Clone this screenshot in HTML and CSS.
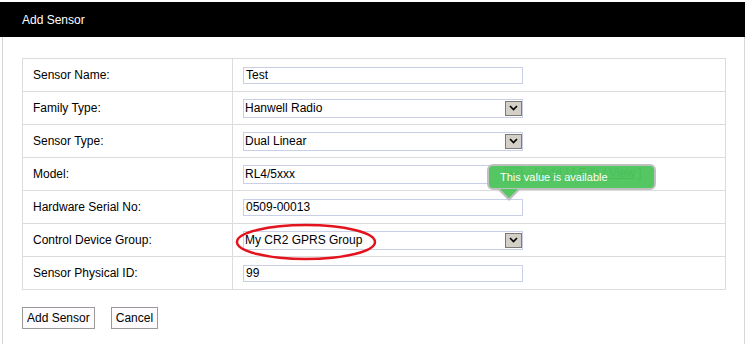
FILE: index.html
```html
<!doctype html>
<html lang="en">

<head>
  <meta charset="UTF-8" />
  <title>Add Sensor</title>
  <link rel="stylesheet" href="styles.css">
</head>

<body>
  <div class="panel">
    <div class="panel-header">Add Sensor</div>
    <div class="panel-body">
      <table class="form-table">
        <tr>
          <td class="label">Sensor Name:</td>
          <td><input class="field" type="text" value="Test" /></td>
        </tr>
        <tr>
          <td class="label">Family Type:</td>
          <td>
            <span class="select-wrap">
              <select class="field"><option>Hanwell Radio</option></select>
              <span class="arrow"><svg width="9" height="6" viewBox="0 0 9 6"><path d="M1 1 L4.5 4.5 L8 1" fill="none" stroke="#000" stroke-width="1.6" /></svg></span>
            </span>
          </td>
        </tr>
        <tr>
          <td class="label">Sensor Type:</td>
          <td>
            <span class="select-wrap">
              <select class="field"><option>Dual Linear</option></select>
              <span class="arrow"><svg width="9" height="6" viewBox="0 0 9 6"><path d="M1 1 L4.5 4.5 L8 1" fill="none" stroke="#000" stroke-width="1.6" /></svg></span>
            </span>
          </td>
        </tr>
        <tr>
          <td class="label">Model:</td>
          <td class="model-cell">
            <span class="select-wrap">
              <select class="field"><option>RL4/5xxx</option></select>
              <span class="arrow"><svg width="9" height="6" viewBox="0 0 9 6"><path d="M1 1 L4.5 4.5 L8 1" fill="none" stroke="#000" stroke-width="1.6" /></svg></span>
            </span>
            <span class="links">[ <a href="#">Add</a> ] [ <a href="#">Edit / View</a> ]</span>
            <div class="tooltip">This value is available</div>
          </td>
        </tr>
        <tr>
          <td class="label">Hardware Serial No:</td>
          <td><input class="field" type="text" value="0509-00013" /></td>
        </tr>
        <tr>
          <td class="label">Control Device Group:</td>
          <td class="group-cell">
            <span class="select-wrap">
              <select class="field"><option>My CR2 GPRS Group</option></select>
              <span class="arrow"><svg width="9" height="6" viewBox="0 0 9 6"><path d="M1 1 L4.5 4.5 L8 1" fill="none" stroke="#000" stroke-width="1.6" /></svg></span>
            </span>
            <svg class="ring" width="142" height="38" viewBox="0 0 142 38"><ellipse cx="71" cy="19" rx="69" ry="17" fill="none" stroke="#e3141e" stroke-width="2.5" /></svg>
          </td>
        </tr>
        <tr>
          <td class="label">Sensor Physical ID:</td>
          <td><input class="field" type="text" value="99" /></td>
        </tr>
      </table>

      <div class="actions">
        <button class="btn">Add Sensor</button>
        <button class="btn">Cancel</button>
      </div>
    </div>
  </div>
</body>

</html>
```

FILE: styles.css
```css
body {
  font-family: "Liberation Sans", Arial, sans-serif;
  font-size: 12px;
  margin: 0;
  padding: 2px 0 0 0;
  background-color: #fff;
  color: #000;
}

.panel-header {
  background-color: #000;
  color: #fff;
  height: 35px;
  line-height: 36px;
  padding-left: 22px;
}

.panel-body {
  margin: 0 0 0 2px;
  border-left: 1px solid #d6d6d6;
  border-right: 1px solid #d6d6d6;
  padding: 21px 18px 20px 19px;
  min-height: 307px;
  box-sizing: border-box;
}

.form-table {
  border-collapse: collapse;
  width: 704px;
}

.form-table td {
  border: 1px solid #dcdcdc;
  height: 32px;
  padding: 0 10px;
  vertical-align: middle;
}

.form-table td.label {
  width: 189px;
}

.field {
  font-family: "Liberation Sans", Arial, sans-serif;
  font-size: 12px;
  color: #000;
  box-sizing: border-box;
  width: 280px;
  height: 17px;
  border: 1px solid #c8cfe6;
  padding: 0 2px;
  margin: 0;
  background: #fff;
  vertical-align: middle;
}

select.field {
  appearance: none;
  -webkit-appearance: none;
  height: 19px;
  border-radius: 0;
  padding: 0 1px;
}

.select-wrap {
  position: relative;
  display: inline-block;
  vertical-align: middle;
}

.arrow {
  position: absolute;
  right: 1px;
  top: 2px;
  width: 15px;
  height: 13px;
  background-color: #d4d0c8;
  border: 1px solid #7a7a7a;
  display: flex;
  align-items: center;
  justify-content: center;
}

.model-cell,
.group-cell {
  position: relative;
}

.links {
  margin-left: 8px;
  color: #333;
}

.links a {
  color: #2a3a8a;
}

.tooltip {
  position: absolute;
  left: 254px;
  top: 6px;
  width: 154px;
  height: 22px;
  line-height: 22px;
  padding-left: 11px;
  font-size: 11px;
  background-color: #4bc55b;
  color: #fff;
  border: 2px solid #bdbdbd;
  border-radius: 6px;
  opacity: 0.95;
}

.tooltip::before {
  content: "";
  position: absolute;
  left: 9px;
  bottom: -13px;
  border-left: 11px solid transparent;
  border-right: 11px solid transparent;
  border-top: 11px solid #bdbdbd;
}

.tooltip::after {
  content: "";
  position: absolute;
  left: 11px;
  bottom: -10px;
  border-left: 9px solid transparent;
  border-right: 9px solid transparent;
  border-top: 9px solid #4bc55b;
}

.ring {
  position: absolute;
  left: 2px;
  top: -1px;
  pointer-events: none;
}

.actions {
  display: flex;
  gap: 16px;
  margin-top: 17px;
}

.btn {
  font-family: "Liberation Sans", Arial, sans-serif;
  font-size: 12px;
  color: #000;
  background-color: #fdfbfd;
  border: 1px solid #9a9a9a;
  height: 22px;
  padding: 0 4px;
  margin: 0;
}
```
